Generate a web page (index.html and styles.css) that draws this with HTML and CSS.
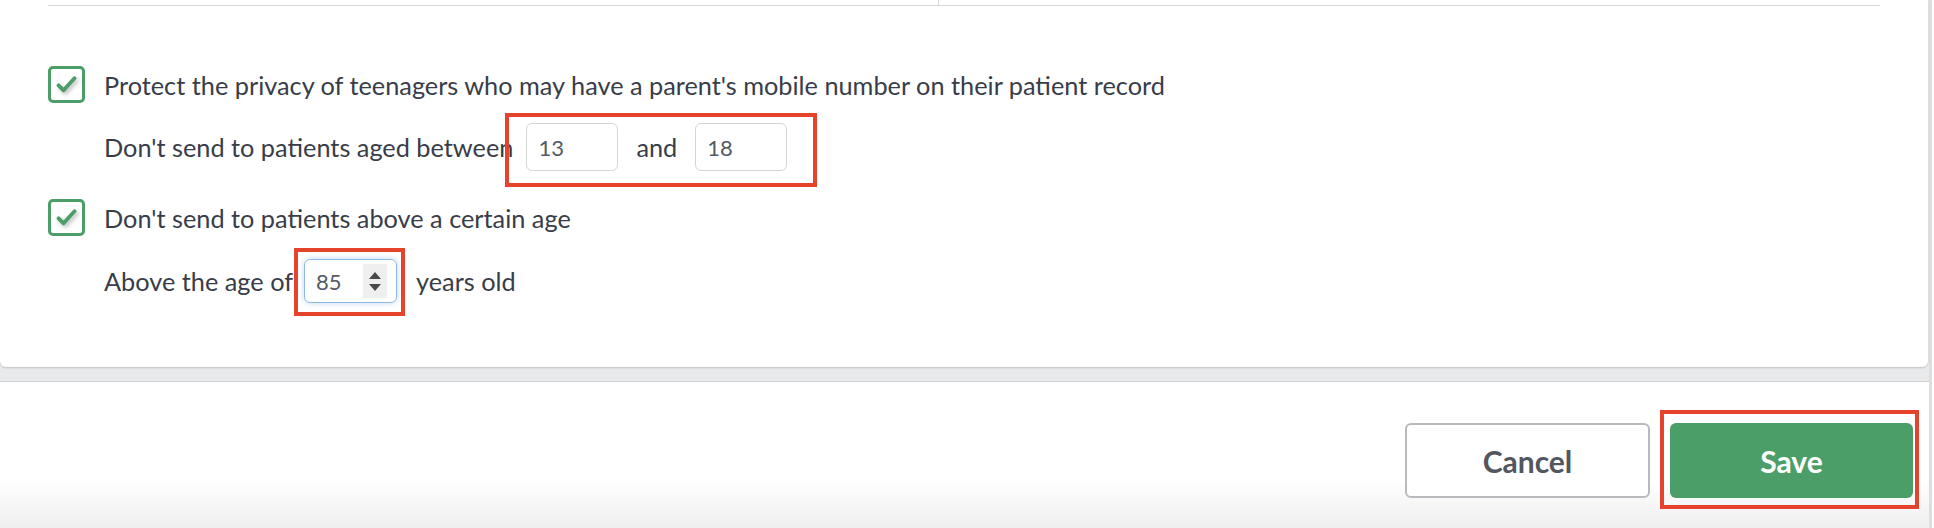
FILE: index.html
```html
<!DOCTYPE html>
<html lang="en">
<head>
    <meta charset="UTF-8">
    <meta name="viewport" content="width=device-width, initial-scale=1.0">
    <title>SMS Settings</title>
    <link rel="stylesheet" href="styles.css">
</head>
<body>
    <div class="page">
        <main class="card">
            <!-- Bottom of the settings table above -->
            <div class="columns">
                <div class="col col-left"></div>
                <div class="col"></div>
            </div>

            <section class="options">
                <!-- Option: teenagers -->
                <div class="option">
                    <label class="option-head">
                        <span class="checkbox">
                            <svg viewBox="0 0 37 37" width="31" height="31"><path d="M9 19.5 L15 25.5 L28 11" /></svg>
                        </span>
                        Protect the privacy of teenagers who may have a parent's mobile number on their patient record
                    </label>
                    <div class="option-body">
                        <span>Don't send to patients aged between</span>
                        <div class="field-group highlight highlight-range">
                            <input class="text-input" type="text" value="13">
                            <span>and</span>
                            <input class="text-input" type="text" value="18">
                        </div>
                    </div>
                </div>

                <!-- Option: max age -->
                <div class="option">
                    <label class="option-head">
                        <span class="checkbox">
                            <svg viewBox="0 0 37 37" width="31" height="31"><path d="M9 19.5 L15 25.5 L28 11" /></svg>
                        </span>
                        Don't send to patients above a certain age
                    </label>
                    <div class="option-body">
                        <span>Above the age of</span>
                        <div class="num-input highlight highlight-age">
                            <span class="num-value">85</span>
                            <span class="spinner">
                                <span class="arrow-up"></span>
                                <span class="arrow-down"></span>
                            </span>
                        </div>
                        <span class="unit">years old</span>
                    </div>
                </div>
            </section>
        </main>

        <footer class="actions">
            <button class="btn btn-cancel">Cancel</button>
            <span class="highlight highlight-save">
                <button class="btn btn-save">Save</button>
            </span>
        </footer>
    </div>
</body>
</html>
```

FILE: styles.css
```css
html, body {
    margin: 0;
    padding: 0;
    background-color: #ffffff;
}
body {
    font-family: Lato, "Open Sans", Arial, sans-serif;
    color: #383d49;
    font-size: 25.3px;
    height: 528px;
    overflow: hidden;
}
.page {
    width: 1929px;
    height: 528px;
    border-right: 3px solid #dedede;
    background-color: #e9eaec;
    display: flex;
    flex-direction: column;
}
.card {
    width: 1928px;
    box-sizing: border-box;
    padding: 0 48px 64px;
    background-color: #ffffff;
    border-radius: 0 0 6px 6px;
    box-shadow: 0 1px 2px rgba(0, 0, 0, 0.18);
}
.columns {
    display: grid;
    grid-template-columns: 891px 1fr;
    height: 5px;
    border-bottom: 1px solid #d6d6d6;
}
.col-left {
    border-right: 1px solid #d6d6d6;
}
.options {
    padding-top: 60px;
}
.option + .option {
    margin-top: 28px;
}
.option-head {
    display: flex;
    align-items: center;
    gap: 19px;
    height: 37px;
    cursor: pointer;
}
.checkbox {
    width: 37px;
    height: 37px;
    box-sizing: border-box;
    border: 3px solid #4c9e68;
    border-radius: 5px;
    display: flex;
    align-items: center;
    justify-content: center;
    background-color: #ffffff;
}
.checkbox svg {
    filter: drop-shadow(2px 2px 2px rgba(0, 0, 0, 0.28));
}
.checkbox path {
    fill: none;
    stroke: #4c9e68;
    stroke-width: 4.5;
    stroke-linecap: round;
    stroke-linejoin: round;
}
.option-body {
    display: flex;
    align-items: center;
    gap: 13px;
    height: 48px;
    padding-left: 56px;
    margin-top: 20px;
}
.option + .option .option-body {
    margin-top: 23px;
    height: 44px;
    gap: 11px;
}
.option-body .unit {
    margin-left: 8px;
}
.field-group {
    display: flex;
    align-items: center;
    gap: 18px;
}
.text-input {
    width: 92px;
    height: 48px;
    box-sizing: border-box;
    padding: 0 11px;
    border: 1px solid #d5d5d5;
    border-radius: 6px;
    font-family: Lato, Arial, sans-serif;
    font-size: 22px;
    color: #555a63;
    outline: none;
}
.num-input {
    width: 93px;
    height: 44px;
    box-sizing: border-box;
    padding: 0 9px 0 11px;
    border: 1px solid #8ab9ea;
    border-radius: 6px;
    box-shadow: 0 0 6px rgba(82, 150, 230, 0.35);
    display: flex;
    align-items: center;
    justify-content: space-between;
    font-size: 22px;
    color: #555a63;
}
.spinner {
    width: 24px;
    height: 34px;
    background-color: #efefef;
    display: flex;
    flex-direction: column;
    align-items: center;
    justify-content: center;
    gap: 5px;
}
.arrow-up, .arrow-down {
    width: 0;
    height: 0;
    border-left: 6px solid transparent;
    border-right: 6px solid transparent;
}
.arrow-up {
    border-bottom: 7px solid #4a4a4a;
}
.arrow-down {
    border-top: 7px solid #4a4a4a;
}

/* red annotation frames drawn over the screenshot */
.highlight {
    position: relative;
}
.highlight::after {
    content: '';
    position: absolute;
    border: 4px solid #e5432c;
    pointer-events: none;
}
.highlight-range::after {
    top: -10px;
    right: -30px;
    bottom: -16px;
    left: -21px;
}
.highlight-age::after {
    top: -12px;
    right: -9px;
    bottom: -14px;
    left: -11px;
}
.highlight-save {
    display: inline-flex;
}
.highlight-save::after {
    top: -13px;
    right: -6px;
    bottom: -11px;
    left: -10px;
}

.actions {
    flex: 1;
    margin-top: 14px;
    border-top: 1px solid #d3d3d3;
    background: linear-gradient(to bottom, #ffffff 0, #ffffff 97px, #efefef 100%);
    display: flex;
    justify-content: flex-end;
    align-items: flex-start;
    gap: 20px;
    padding: 41px 16px 0 0;
}
.btn {
    width: 245px;
    height: 75px;
    border-radius: 6px;
    font-family: Lato, Arial, sans-serif;
    font-size: 30px;
    font-weight: bold;
    cursor: pointer;
}
.btn-cancel {
    background-color: #ffffff;
    border: 2px solid #b9babe;
    color: #52565f;
}
.btn-save {
    width: 243px;
    background-color: #4c9e68;
    border: none;
    color: #ffffff;
}
```
